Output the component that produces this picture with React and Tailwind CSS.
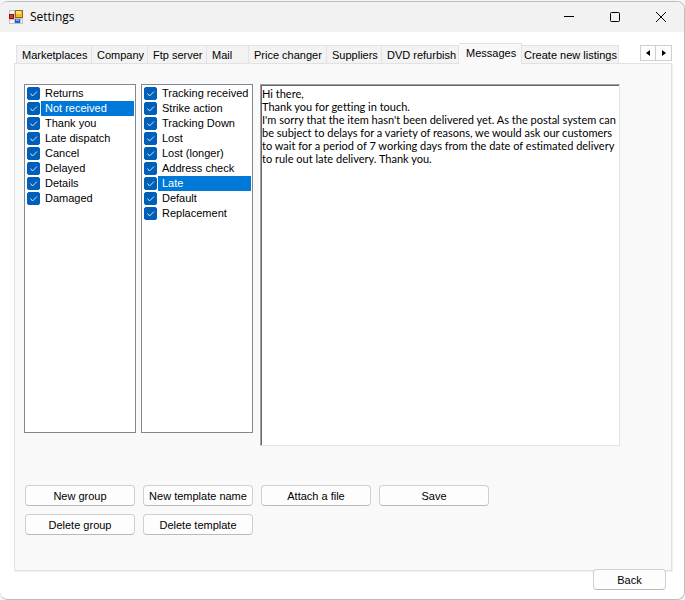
import React, { useState } from 'react';
import clsx from 'clsx';

const TABS = [
  { name: 'Marketplaces', size: 'w-[76px] pl-[5px]' },
  { name: 'Company', size: 'w-[56px] pl-[5px]' },
  { name: 'Ftp server', size: 'w-[59px] pl-[5px]' },
  { name: 'Mail', size: 'w-[42px] pl-[5px]' },
  { name: 'Price changer', size: 'w-[78px] pl-[5px]' },
  { name: 'Suppliers', size: 'w-[55px] pl-[5px]' },
  { name: 'DVD refurbish', size: 'w-[77px] pl-[5px]' },
  { name: 'Messages', size: 'w-[63px] pl-[7px]' },
  { name: 'Create new listings', size: 'w-[97px] pl-[2px]' },
];

const GROUPS = ['Returns', 'Not received', 'Thank you', 'Late dispatch', 'Cancel', 'Delayed', 'Details', 'Damaged'];

const TEMPLATES = [
  'Tracking received',
  'Strike action',
  'Tracking Down',
  'Lost',
  'Lost (longer)',
  'Address check',
  'Late',
  'Default',
  'Replacement',
];

const MESSAGE = `Hi there,
Thank you for getting in touch.
I'm sorry that the item hasn't been delivered yet. As the postal system can be subject to delays for a variety of reasons, we would ask our customers to wait for a period of 7 working days from the date of estimated delivery to rule out late delivery. Thank you.`;

function AppIcon() {
  return (
    <svg width="14" height="14" viewBox="0 0 14 14" shapeRendering="crispEdges" aria-hidden="true">
      <rect width="14" height="14" fill="#c3c3c8" />
      <rect x="1" y="1" width="4" height="3" fill="#f5f5f5" />
      <rect x="1" y="10" width="4" height="3" fill="#f5f5f5" />
      <rect x="0" y="4" width="5" height="5" fill="#8e1410" />
      <rect x="1" y="5" width="3" height="3" fill="#d83a26" />
      <rect x="6" y="0" width="8" height="8" fill="#9a6a10" />
      <rect x="7" y="1" width="6" height="6" fill="#f5b921" />
      <rect x="7" y="1" width="5" height="3" fill="#ffdc6b" />
      <rect x="6" y="9" width="5" height="4" fill="#2c62c8" />
      <rect x="7" y="9" width="3" height="2" fill="#6fa4f2" />
      <rect x="12" y="9" width="1" height="4" fill="#f5f5f5" />
    </svg>
  );
}

function TitleBar() {
  return (
    <header className="flex h-[30px] items-center bg-[#f2f2f2] pl-[9px] pr-3.5">
      <AppIcon />
      <h1 className="ml-[7px] flex-1 font-['Open_Sans',sans-serif] text-[12px] leading-4">Settings</h1>
      <div className="flex items-center gap-7">
        <button type="button" aria-label="Minimize" className="p-1">
          <svg width="10" height="10" viewBox="0 0 10 10" stroke="#000" shapeRendering="crispEdges">
            <path d="M0 4.5h10" />
          </svg>
        </button>
        <button type="button" aria-label="Maximize" className="p-1">
          <svg width="10" height="10" viewBox="0 0 10 10" fill="none" stroke="#000">
            <rect x="0.5" y="0.5" width="9" height="9" rx="1" />
          </svg>
        </button>
        <button type="button" aria-label="Close" className="p-1">
          <svg width="10" height="10" viewBox="0 0 10 10" stroke="#000">
            <path d="M0 0l10 10M10 0L0 10" />
          </svg>
        </button>
      </div>
    </header>
  );
}

function CheckList({ label, items, selected, onSelect }) {
  return (
    <ul aria-label={label} className="h-[349px] w-28 shrink-0 border border-[#828790] bg-white p-px">
      {items.map((item) => {
        const id = `${label}-${item}`.replace(/\W+/g, '-');
        return (
          <li key={item} className="flex h-[15px] items-center gap-px pl-px">
            <span className="relative grid h-[13px] w-[13px] shrink-0">
              <input
                id={id}
                type="checkbox"
                defaultChecked
                className="peer h-[13px] w-[13px] appearance-none rounded-[2px] border border-[#005fb8] bg-white checked:bg-[#005fb8]"
              />
              <svg
                viewBox="0 0 13 13"
                fill="none"
                stroke="#d3e4f4"
                className="pointer-events-none absolute inset-0 hidden peer-checked:block"
              >
                <path d="M3.5 6.5l2 2.5 4.5-4.5" />
              </svg>
            </span>
            <label
              htmlFor={id}
              onClick={() => onSelect(item)}
              className={clsx('h-[15px] flex-1 pl-1 leading-[15px] whitespace-nowrap', item === selected && 'bg-[#0078d7] text-white')}
            >
              {item}
            </label>
          </li>
        );
      })}
    </ul>
  );
}

function Button({ children, className }) {
  return (
    <button
      type="button"
      className={clsx('h-[21px] rounded-[4px] border border-[#d0d0d0] border-b-[#bababa] bg-[#fdfdfd] pt-px text-center leading-[18px]', className)}
    >
      {children}
    </button>
  );
}

export default function App() {
  const [tab, setTab] = useState('Messages');
  const [group, setGroup] = useState('Not received');
  const [template, setTemplate] = useState('Late');

  return (
    <div className="min-h-screen bg-[#f4f6f8] pt-px font-['Liberation_Sans',Arial,sans-serif] text-[11px] text-black">
      <div className="flex min-h-[599px] flex-col overflow-hidden rounded-lg border border-l-0 border-[#bdbdbd] bg-white">
        <TitleBar />

        <main className="flex flex-1 flex-col pt-[11px] pr-3 pl-3.5">
          {/* tab strip */}
          <div className="flex items-end justify-between">
            <div role="tablist" className="flex items-end pl-0.5">
              {TABS.map(({ name, size }) => (
                <button
                  key={name}
                  type="button"
                  role="tab"
                  aria-selected={tab === name}
                  onClick={() => setTab(name)}
                  className={clsx(
                    'border-t border-r border-[#e2e2e2] text-left leading-4 whitespace-nowrap first:border-l',
                    size,
                    tab === name ? 'relative -mb-px h-[21px] bg-[#f9f9f9] pb-0.5' : 'h-[18px] bg-[#f3f3f3] pt-px'
                  )}
                >
                  {name}
                </button>
              ))}
            </div>
            <div className="mb-0.5 flex">
              <button type="button" aria-label="Scroll tabs left" className="grid h-4 w-4 place-items-center border border-[#cfcfcf] bg-[#fdfdfd]">
                <svg width="4" height="6" viewBox="0 0 4 6">
                  <path d="M4 0v6L0 3z" />
                </svg>
              </button>
              <button type="button" aria-label="Scroll tabs right" className="-ml-px grid h-4 w-[17px] place-items-center border border-[#cfcfcf] bg-[#fdfdfd]">
                <svg width="4" height="6" viewBox="0 0 4 6">
                  <path d="M0 0v6l4-3z" />
                </svg>
              </button>
            </div>
          </div>

          {/* tab page */}
          <section className="h-[508px] border border-[#e2e2e2] bg-[#f9f9f9] pt-5 pl-[9px] shadow-[1px_1px_0_#f0f0f0]">
            <div className="flex items-start pr-[51px]">
              <CheckList label="Groups" items={GROUPS} selected={group} onSelect={setGroup} />
              <div className="ml-[5px] flex">
                <CheckList label="Templates" items={TEMPLATES} selected={template} onSelect={setTemplate} />
              </div>
              <textarea
                aria-label="Message"
                defaultValue={MESSAGE}
                spellCheck={false}
                className="ml-[7px] h-[362px] min-w-0 flex-1 resize-none overflow-hidden border border-t-[#a0a0a0] border-r-[#e3e3e3] border-b-[#e3e3e3] border-l-[#a0a0a0] bg-white pt-0.5 pl-px font-[Lato,Arial,sans-serif] leading-[13px] shadow-[inset_1px_1px_0_#696969] outline-none [font-variant-ligatures:none]"
              />
            </div>

            <div className="mt-[39px] grid w-fit grid-cols-[repeat(4,110px)] gap-x-2 gap-y-2 pl-px">
              <Button>New group</Button>
              <Button>New template name</Button>
              <Button>Attach a file</Button>
              <Button>Save</Button>
              <Button>Delete group</Button>
              <Button>Delete template</Button>
            </div>
          </section>

          <div className="relative -mt-0.5 flex justify-end pr-1.5">
            <Button className="w-[73px]">Back</Button>
          </div>
        </main>
      </div>
    </div>
  );
}
